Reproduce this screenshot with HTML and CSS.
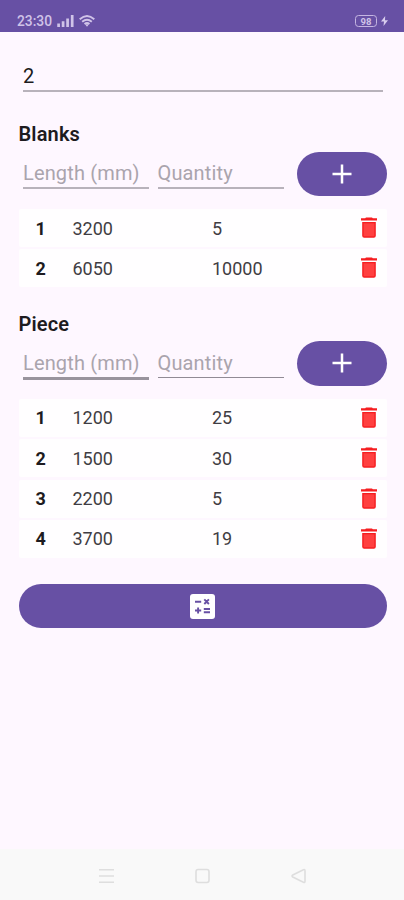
FILE: index.html
```html
<!DOCTYPE html>
<html lang="en">
<head>
<meta charset="utf-8">
<title>Cutting list</title>
<link rel="stylesheet" href="styles.css">
</head>
<body>
<svg class="defs" width="0" height="0">
  <symbol id="trash" viewBox="0 0 16 22">
    <path class="trash-edge" d="M0 1.2H4.2L5 .4H11L11.8 1.2H16V3.6H0ZM1.2 5H14.8V18.8Q14.8 20.8 12.8 20.8H3.2Q1.2 20.8 1.2 18.8Z"/>
    <path class="trash-fill" d="M2.6 6.3H13.4V19.3H2.6Z"/>
  </symbol>
  <symbol id="plus" viewBox="0 0 20 20"><path d="M10 .5V19.5M.5 10H19.5" stroke="#fff" stroke-width="2.5"/></symbol>
</svg>
<header class="status">
  <span class="time">23:30</span>
  <svg class="signal" width="17" height="12" viewBox="0 0 17 12"><path d="M1.6 8.5V12M6.1 6.3V12M10.6 3.5V12M15.2 0V12" stroke="#d0c3e8" stroke-width="2.7"/></svg>
  <svg class="wifi" width="16" height="12" viewBox="0 0 16 12" fill="none" stroke="#d0c3e8" stroke-width="1.9"><path d="M.7 4.3Q8-2.3 15.3 4.3M3.2 6.8Q8 2.7 12.8 6.8M5.5 9.1Q8 7.1 10.5 9.1"/><path d="M6 9.3H10L8 11.8Z" fill="#d0c3e8" stroke="none"/></svg>
  <span class="battery"><span class="level">98</span></span>
  <svg class="bolt" width="7" height="10" viewBox="0 0 7 10"><path d="M4.2 0L0 5.6H3L2.5 10L7 4.3H4Z" fill="#d9cdee"/></svg>
</header>
<main>
  <div class="field name">2</div>
  <section>
    <h2>Blanks</h2>
    <div class="entry">
      <div class="field hint">Length (mm)</div>
      <div class="field hint">Quantity</div>
      <button class="add" aria-label="Add"><svg width="20" height="20"><use href="#plus"/></svg></button>
    </div>
    <div class="list">
      <div class="row"><b>1</b><span>3200</span><span>5</span><svg class="trash"><use href="#trash"/></svg></div>
      <div class="row"><b>2</b><span>6050</span><span>10000</span><svg class="trash"><use href="#trash"/></svg></div>
    </div>
  </section>
  <section>
    <h2>Piece</h2>
    <div class="entry">
      <div class="field hint focus">Length (mm)</div>
      <div class="field hint thin">Quantity</div>
      <button class="add" aria-label="Add"><svg width="20" height="20"><use href="#plus"/></svg></button>
    </div>
    <div class="list">
      <div class="row"><b>1</b><span>1200</span><span>25</span><svg class="trash"><use href="#trash"/></svg></div>
      <div class="row"><b>2</b><span>1500</span><span>30</span><svg class="trash"><use href="#trash"/></svg></div>
      <div class="row"><b>3</b><span>2200</span><span>5</span><svg class="trash"><use href="#trash"/></svg></div>
      <div class="row"><b>4</b><span>3700</span><span>19</span><svg class="trash"><use href="#trash"/></svg></div>
    </div>
  </section>
  <button class="calc" aria-label="Calculate">
    <svg width="25" height="25" viewBox="0 0 25 25"><rect width="25" height="25" rx="3" fill="#fff"/><path d="M5 7.7H11.2M5 16.5H11.2M8.1 13.4V19.6M14.3 5.4L18.9 10M18.9 5.4L14.3 10M13.8 15H20M13.8 18.2H20" fill="none" stroke="#6750a4" stroke-width="1.9"/></svg>
  </button>
</main>
<nav>
  <svg width="15" height="16" viewBox="0 0 15 16"><path d="M0 1.8H15M0 8H15M0 14.2H15"/></svg>
  <svg width="15" height="16" viewBox="0 0 15 16"><rect x="1" y="1.5" width="13" height="13" rx="2.2"/></svg>
  <svg width="15" height="16" viewBox="0 0 15 16"><path d="M12.4 1.8Q14 1 14 2.8V13.2Q14 15 12.4 14.2L1.8 9Q.3 8 1.8 7Z"/></svg>
</nav>
</body>
</html>
```
FILE: styles.css
```css
* { box-sizing: border-box; }

body {
  margin: 0;
  width: 404px;
  height: 900px;
  overflow: hidden;
  display: flex;
  flex-direction: column;
  background: #fef7ff;
  color: #1d1b20;
  font-family: Roboto, "Liberation Sans", sans-serif;
}

svg { display: block; flex: none; }
.defs { position: absolute; }

.status {
  display: flex;
  align-items: center;
  height: 32px;
  padding: 10px 16px 0 17px;
  background: #6750a4;
  color: #d0c3e8;
}
.time { width: 35px; font-size: 13.8px; font-weight: 500; line-height: 16px; white-space: nowrap; }
.signal { margin-left: 4.5px; }
.wifi { margin-left: 5px; }
.battery {
  margin-left: auto;
  width: 22px;
  height: 12px;
  border: 1.5px solid #c5b6e2;
  border-radius: 3.5px;
  display: flex;
  align-items: center;
  justify-content: center;
}
.level { font-size: 9.5px; font-weight: 700; line-height: 9px; }
.bolt { margin-left: 4px; }

main { flex: 1; padding: 24px 17.5px 0 18.5px; }

.field {
  border-bottom: 2px solid #b8b2bb;
  font-size: 20px;
  line-height: 24px;
  white-space: nowrap;
}
.name { height: 36px; margin: 0 4px 0 4.5px; padding-top: 8px; }

section { height: 189.7px; padding-top: 30px; }
section + section { height: auto; }

h2 { margin: 0; font-size: 20px; font-weight: 600; line-height: 24px; letter-spacing: .15px; }

.entry {
  display: grid;
  grid-template-columns: 125.5px 126px 90px;
  column-gap: 9px;
  justify-content: start;
  height: 45px;
  margin: 5.5px 0 0 4.5px;
}
.hint { height: 37.5px; padding-top: 9.5px; color: #aaa4ad; letter-spacing: .15px; }
.focus { height: 38.5px; border-bottom: 3px solid #99939d; }
.thin { border-bottom: 1px solid #918b95; height: 37px; }

button { border: 0; padding: 0; background: #6750a4; display: flex; align-items: center; justify-content: center; }
.add { width: 90px; height: 44.5px; margin-left: 4px; border-radius: 22.5px; }

.list { display: grid; grid-auto-rows: 38px; row-gap: 2.4px; margin-top: 12.6px; }
.row {
  display: grid;
  grid-template-columns: 54px 139.5px 148.5px 16px;
  align-items: center;
  background: #fffeff;
  border-radius: 2px;
  font-size: 18px;
  color: #3f3d43;
}
.row b { padding-left: 17px; font-weight: 700; color: #1d1b20; }
.trash { width: 16px; height: 22px; }
.trash-edge { fill: #f51d20; }
.trash-fill { fill: #ff4040; }

.calc { width: 368px; height: 44.5px; margin-top: 25.9px; border-radius: 22.5px; }

nav {
  height: 51px;
  padding: 3px 98px 0 98.5px;
  display: flex;
  align-items: center;
  justify-content: space-between;
  background: #f9f9f9;
}
nav svg { fill: none; stroke: #dedede; stroke-width: 1.6; }
```
